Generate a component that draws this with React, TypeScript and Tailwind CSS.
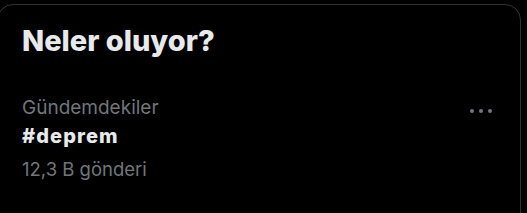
export default function App() {
  return (
    <div
      className="w-[527px] h-[213px] bg-black overflow-hidden pt-[4px]"
      style={{ fontFamily: 'Inter, "Noto Sans", sans-serif' }}
    >
      <div className="-ml-[3px] w-[524px] h-[240px] rounded-2xl border border-[#2f3336]">
        <h2 className="pl-[24px] pt-[19px] text-[29px] leading-[34px] font-extrabold text-[#e7e9ea]">
          Neler oluyor?
        </h2>
        <div className="mt-[37px] flex items-start justify-between pl-[24px] pr-[28px]">
          <div className="flex flex-col">
            <span className="text-[19px] leading-[25px] text-[#71767b]">Gündemdekiler</span>
            <span className="mt-[4px] text-[20px] leading-[25px] font-extrabold tracking-[1.1px] text-[#e7e9ea]">
              #deprem
            </span>
            <span className="mt-[8px] text-[18.5px] leading-[25px] text-[#71767b]">12,3 B gönderi</span>
          </div>
          <div className="mt-[14px] flex gap-[5px]">
            <span className="w-[4px] h-[4px] rounded-full bg-[#71767b]" />
            <span className="w-[4px] h-[4px] rounded-full bg-[#71767b]" />
            <span className="w-[4px] h-[4px] rounded-full bg-[#71767b]" />
          </div>
        </div>
      </div>
    </div>
  );
}
